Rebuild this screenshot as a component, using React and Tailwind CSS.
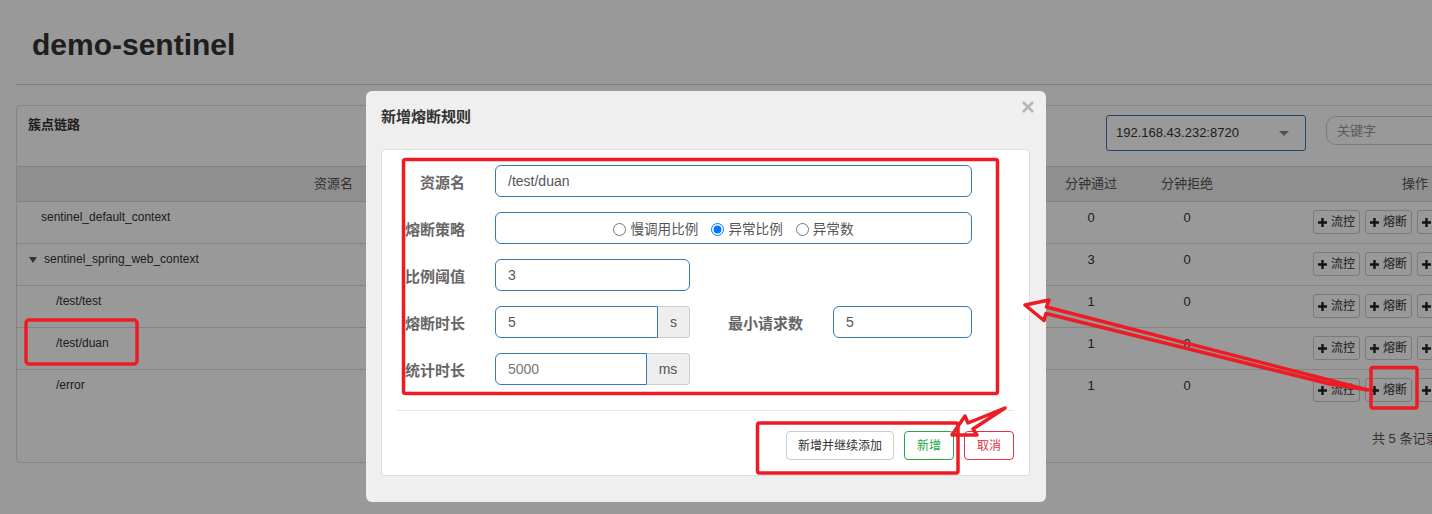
import React from 'react';

const rows = [
  { name: 'sentinel_default_context', pass: 0, block: 0, pad: 'pl-[24px]' },
  { name: 'sentinel_spring_web_context', pass: 3, block: 0, pad: 'pl-[12px]', caret: true },
  { name: '/test/test', pass: 1, block: 0, pad: 'pl-[39px]' },
  { name: '/test/duan', pass: 1, block: 0, pad: 'pl-[39px]' },
  { name: '/error', pass: 1, block: 0, pad: 'pl-[39px]' },
];

function Plus() {
  return (
    <svg width="9" height="9" viewBox="0 0 9 9" className="shrink-0">
      <path d="M4.5 0v9M0 4.5h9" stroke="#222" strokeWidth="2.4" />
    </svg>
  );
}

function OpButton({ label }) {
  return (
    <button className="w-[47px] h-[24px] flex items-center justify-center gap-[4px] border border-[#ccc] rounded-[3px] bg-white text-[12px] text-[#333] shrink-0">
      <Plus />
      <span>{label}</span>
    </button>
  );
}

function Label({ children, className = '' }) {
  return (
    <div className={`text-[15px] leading-[20px] font-bold text-[#666] whitespace-nowrap pt-[3px] ${className}`}>
      {children}
    </div>
  );
}

function Radio({ label, checked }) {
  return (
    <label className="flex items-center gap-[4px] text-[13.6px] text-[#555] leading-[20px]">
      <input type="radio" name="grade" defaultChecked={checked} className="w-[13px] h-[13px] mt-[3px]" />
      <span className="pt-[3px]">{label}</span>
    </label>
  );
}

export default function App() {
  return (
    <div className="relative w-[1432px] h-[514px] overflow-hidden bg-white text-[#333] font-['Liberation_Sans','Noto_Sans_CJK_SC',sans-serif]">
      {/* page underneath */}
      <div className="pl-[32px] pt-[28px]">
        <h1 className="text-[30px] leading-[34px] font-bold text-[#333]">demo-sentinel</h1>
      </div>
      <div className="ml-[16px] mt-[22px] border-t border-[#d4d4d4]" />

      <div className="ml-[16px] mt-[20px] w-[1460px] border border-[#dcdcdc] rounded-[4px]">
        <div className="h-[60px] flex items-start pl-[11px] pr-[10px] pt-[9px]">
          <div className="flex-1 text-[13px] leading-[20px] font-bold text-[#333]">簇点链路</div>
          <div className="w-[200px] h-[36px] border border-[#337ab7] rounded-[3px] flex items-center justify-between pl-[9px] pr-[16px] text-[13px] text-[#333]">
            <span>192.168.43.232:8720</span>
            <svg width="10" height="5" viewBox="0 0 10 5">
              <path d="M0 0h10L5 5z" fill="#888" />
            </svg>
          </div>
          <div className="ml-[20px] mt-[1px] w-[139px] h-[29px] border border-[#ccc] rounded-[10px] flex items-center pl-[10px] text-[13px] text-[#999]">
            关键字
          </div>
        </div>

        <div className="grid grid-cols-[633px_98px_98px_98px_99px_96px_96px_1fr] h-[36px] border-y border-[#ddd] bg-[#eeeef0] text-[13px] text-[#555] items-center">
          <div className="text-center">资源名</div>
          <div className="text-center">通过QPS</div>
          <div className="text-center">拒绝QPS</div>
          <div className="text-center">并发数</div>
          <div className="text-center">平均RT</div>
          <div className="text-center">分钟通过</div>
          <div className="text-center">分钟拒绝</div>
          <div className="pl-[167px]">操作</div>
        </div>

        {rows.map((r, i) => (
          <div
            key={r.name}
            className={`grid grid-cols-[633px_98px_98px_98px_99px_96px_96px_1fr] h-[42px] text-[12px] text-[#333] ${i < rows.length - 1 ? 'border-b border-[#ddd]' : ''}`}
          >
            <div className={`flex items-start gap-[7px] pt-[7px] leading-[17px] ${r.pad}`}>
              {r.caret && (
                <svg width="8" height="6" viewBox="0 0 8 6" className="mt-[6px]">
                  <path d="M0 0h8L4 6z" fill="#555" />
                </svg>
              )}
              <span>{r.name}</span>
            </div>
            <div className="text-center pt-[7px] leading-[17px]">0</div>
            <div className="text-center pt-[7px] leading-[17px]">0</div>
            <div className="text-center pt-[7px] leading-[17px]">0</div>
            <div className="text-center pt-[7px] leading-[17px]">0</div>
            <div className="text-center pt-[7px] leading-[17px] text-[13px]">{r.pass}</div>
            <div className="text-center pt-[7px] leading-[17px] text-[13px]">{r.block}</div>
            <div className="flex gap-[5px] pl-[78px] pt-[8px]">
              <OpButton label="流控" />
              <OpButton label="熔断" />
              <OpButton label="热点" />
              <OpButton label="授权" />
            </div>
          </div>
        ))}

        <div className="h-[50px] pl-[1355px] pt-[18px] text-[13px] leading-[18px] text-[#555] whitespace-nowrap">
          共 5 条记录, 第 1 / 1 页
        </div>
      </div>

      {/* dimming backdrop */}
      <div className="absolute inset-0 bg-black/40" />

      {/* modal */}
      <div className="absolute left-[366px] top-[91px] w-[680px] h-[411px] bg-[#efefef] rounded-[6px]">
        <div className="relative h-[58px] pl-[15px] pt-[16px]">
          <div className="text-[15px] leading-[20px] font-bold text-[#333]">新增熔断规则</div>
          <button className="absolute right-[12px] top-[10px]">
            <svg width="12" height="12" viewBox="0 0 12 12">
              <path d="M1 1l10 10M11 1L1 11" stroke="#b5b5b5" strokeWidth="2.6" />
            </svg>
          </button>
        </div>

        <div className="ml-[15px] w-[649px] bg-white border border-[#ddd] rounded-[4px] px-[15px] pt-[15px] pb-[15px]">
          <div className="flex flex-col gap-[15px]">
            <div className="flex items-center h-[32px]">
              <Label className="w-[68px] text-right">资源名</Label>
              <input
                readOnly
                value="/test/duan"
                className="ml-[30px] w-[477px] h-[32px] border border-[#337ab7] rounded-[6px] px-[12px] text-[14px] text-[#555] outline-none"
              />
            </div>

            <div className="flex items-center h-[32px]">
              <Label className="w-[68px] text-right">熔断策略</Label>
              <div className="ml-[30px] w-[477px] h-[32px] border border-[#337ab7] rounded-[6px] flex items-center justify-center gap-[13px]">
                <Radio label="慢调用比例" />
                <Radio label="异常比例" checked />
                <Radio label="异常数" />
              </div>
            </div>

            <div className="flex items-center h-[32px]">
              <Label className="w-[68px] text-right">比例阈值</Label>
              <input
                readOnly
                value="3"
                className="ml-[30px] w-[195px] h-[32px] border border-[#337ab7] rounded-[6px] px-[12px] text-[14px] text-[#555] outline-none"
              />
            </div>

            <div className="flex items-center h-[32px]">
              <Label className="w-[68px] text-right">熔断时长</Label>
              <div className="ml-[30px] flex h-[32px]">
                <input
                  readOnly
                  value="5"
                  className="w-[163px] h-[32px] border border-[#337ab7] rounded-l-[6px] px-[12px] text-[14px] text-[#555] outline-none"
                />
                <div className="w-[32px] h-[32px] bg-[#eee] border border-l-0 border-[#ccc] rounded-r-[4px] flex items-center justify-center text-[14px] text-[#555]">
                  s
                </div>
              </div>
              <Label className="ml-[38px]">最小请求数</Label>
              <input
                readOnly
                value="5"
                className="ml-[30px] w-[139px] h-[32px] border border-[#337ab7] rounded-[6px] px-[12px] text-[14px] text-[#555] outline-none"
              />
            </div>

            <div className="flex items-center h-[32px]">
              <Label className="w-[68px] text-right">统计时长</Label>
              <div className="ml-[30px] flex h-[32px]">
                <input
                  readOnly
                  value="5000"
                  className="w-[152px] h-[32px] border border-[#337ab7] rounded-l-[6px] px-[12px] text-[14px] text-[#777] outline-none"
                />
                <div className="w-[43px] h-[32px] bg-[#eee] border border-l-0 border-[#ccc] rounded-r-[4px] flex items-center justify-center text-[14px] text-[#555]">
                  ms
                </div>
              </div>
            </div>
          </div>

          <div className="mt-[25px] border-t border-[#e5e5e5]" />

          <div className="mt-[20px] flex justify-end gap-[10px]">
            <button className="h-[29px] px-[11px] border border-[#ccc] rounded-[4px] bg-white text-[12px] text-[#333]">
              新增并继续添加
            </button>
            <button className="h-[29px] px-[12px] border border-[#28a745] rounded-[4px] bg-white text-[12px] text-[#28a745]">
              新增
            </button>
            <button className="h-[29px] px-[12px] border border-[#dc3545] rounded-[4px] bg-white text-[12px] text-[#dc3545]">
              取消
            </button>
          </div>
        </div>
      </div>

      {/* red annotation marks drawn over the screenshot */}
      <svg className="absolute inset-0 pointer-events-none" width="1432" height="514" viewBox="0 0 1432 514">
        <g fill="none" stroke="#ed1c24" strokeWidth="3.5" strokeLinejoin="round">
          <rect x="26" y="320" width="111" height="44" rx="3" />
          <rect x="403.5" y="159.5" width="594" height="234" rx="2" />
          <rect x="757.5" y="423" width="200.5" height="50" rx="2" />
          <rect x="1371" y="367.5" width="46" height="40.5" rx="2" />
          <path d="M1025 305 L1049 300 L1046.5 307 L1368 390 L1330 384 L1046 313.5 L1044 320.5 Z" />
          <path d="M952 435 L965 416 L968 423 L1005 408 L973 429 L977 435 Z" />
        </g>
      </svg>
    </div>
  );
}
